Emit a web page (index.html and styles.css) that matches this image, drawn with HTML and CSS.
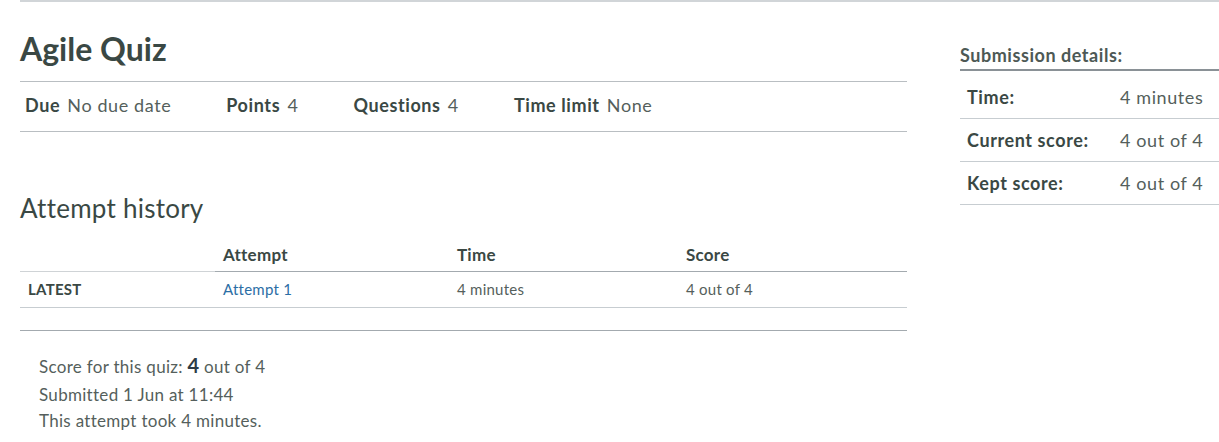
FILE: index.html
```html
<!DOCTYPE html>
<html lang="en">
<head>
<meta charset="utf-8">
<title>Agile Quiz</title>
<link rel="stylesheet" href="styles.css">
</head>
<body>
<div class="page">
  <div class="layout">
    <main class="main">
      <h1 class="title">Agile Quiz</h1>
      <ul class="details">
        <li><span class="label">Due</span> <span class="value">No due date</span></li>
        <li><span class="label">Points</span> <span class="value">4</span></li>
        <li><span class="label">Questions</span> <span class="value">4</span></li>
        <li><span class="label">Time limit</span> <span class="value">None</span></li>
      </ul>

      <h2 class="section-title">Attempt history</h2>
      <div class="history">
        <div class="hrow head">
          <div class="cell blank"></div>
          <div class="cell">Attempt</div>
          <div class="cell">Time</div>
          <div class="cell">Score</div>
        </div>
        <div class="hrow body">
          <div class="cell tag">LATEST</div>
          <div class="cell"><a href="#" class="link">Attempt 1</a></div>
          <div class="cell">4 minutes</div>
          <div class="cell">4 out of 4</div>
        </div>
      </div>
      <div class="divider"></div>

      <div class="summary">
        <div class="sline first">Score for this quiz: <span class="big">4</span> out of 4</div>
        <div class="sline">Submitted 1 Jun at 11:44</div>
        <div class="sline">This attempt took 4 minutes.</div>
      </div>
    </main>

    <aside class="side">
      <h3 class="side-title">Submission details:</h3>
      <dl class="side-list">
        <div class="srow"><dt>Time:</dt><dd>4 minutes</dd></div>
        <div class="srow"><dt>Current score:</dt><dd>4 out of 4</dd></div>
        <div class="srow"><dt>Kept score:</dt><dd>4 out of 4</dd></div>
      </dl>
    </aside>
  </div>
</div>
</body>
</html>
```

FILE: styles.css
```css
* { box-sizing: border-box; }
html, body { margin: 0; padding: 0; background: #fff; }
body {
  font-family: Lato, "Open Sans", "Liberation Sans", sans-serif;
  color: #2d3b45;
  font-size: 16px;
}
.page {
  margin-left: 20px;
  border-top: 2px solid #d1d5d8;
}
.layout {
  display: flex;
  align-items: flex-start;
}
.main {
  width: 887px;
  flex: none;
}
.title {
  margin: 0;
  padding-top: 29px;
  height: 80px;
  font-size: 32px;
  font-weight: 700;
  line-height: 36px;
  color: #3a4844;
  border-bottom: 1px solid #b9bec2;
}
.details {
  list-style: none;
  margin: 0;
  padding: 0 0 4px 5px;
  display: flex;
  height: 50px;
  align-items: center;
  border-bottom: 1px solid #b9bec2;
  font-size: 18px;
  letter-spacing: 0.6px;
}
.details li {
  margin-right: 55px;
  white-space: nowrap;
}
.label { font-weight: 700; color: #3a4844; }
.value { color: #555f5c; margin-left: 2px; }

.section-title {
  margin: 0;
  padding-top: 60px;
  font-size: 26px;
  font-weight: 400;
  line-height: 32px;
  letter-spacing: 0.25px;
  color: #3a4844;
}
.history { margin-top: 16px; }
.hrow {
  display: grid;
  grid-template-columns: 195px 234px 229px 229px;
}
.hrow .cell { padding-left: 8px; }
.head .cell {
  font-weight: 700;
  font-size: 17px;
  letter-spacing: 0.25px;
  height: 32px;
  line-height: 29px;
  border-bottom: 1px solid #a3aaaf;
  color: #3a4844;
}
.head .cell.blank { border-bottom-color: #cfd3d6; }
.body .cell {
  height: 36px;
  line-height: 35px;
  font-size: 15px;
  letter-spacing: 0.25px;
  color: #555f5c;
  border-bottom: 1px solid #c7cdd1;
}
.body .tag { font-weight: 700; color: #3a4844; }
.link { color: #2b6ea5; text-decoration: none; }
.divider {
  margin-top: 22px;
  border-top: 1px solid #a3aaaf;
}
.summary {
  padding: 22px 0 0 19px;
  font-size: 17px;
  letter-spacing: 0.3px;
  color: #555f5c;
}
.sline { line-height: 26px; height: 26px; }
.sline.first { height: 29px; line-height: 27px; }
.big { font-size: 20px; font-weight: 700; line-height: 1; color: #2d3b45; }

.side {
  margin-left: 53px;
  flex: 1;
  padding-top: 41px;
}
.side-title {
  margin: 0;
  font-size: 18px;
  font-weight: 700;
  letter-spacing: 0.55px;
  line-height: 24px;
  height: 28px;
  color: #4d5955;
  border-bottom: 2px solid #8a9196;
}
.side-list { margin: 0; padding-top: 5px; }
.srow {
  display: flex;
  height: 43px;
  align-items: center;
  border-bottom: 1px solid #c7cdd1;
  font-size: 18px;
  letter-spacing: 0.6px;
}
.srow dt {
  width: 160px;
  padding-left: 7px;
  font-weight: 700;
  color: #3a4844;
}
.srow dd { margin: 0; color: #555f5c; }
```
